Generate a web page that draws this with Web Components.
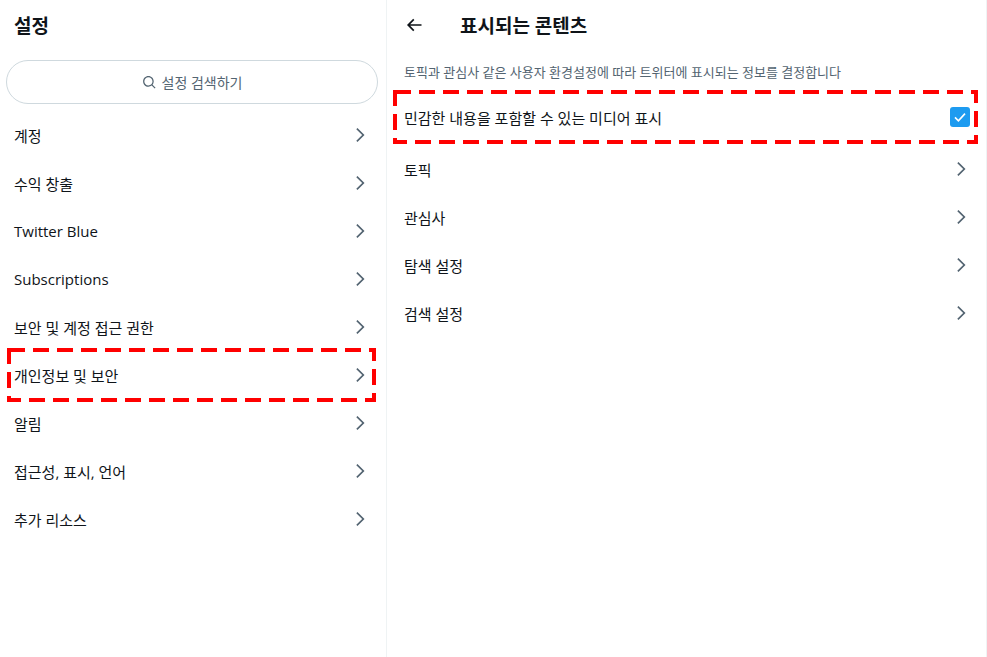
<!DOCTYPE html>
<html lang="ko">
<head>
<meta charset="utf-8">
<style>
  html, body { margin: 0; height: 100%; background: #fff; }
  body { font-family: "Open Sans", "Noto Sans CJK KR", sans-serif; color: #0f1419; overflow: hidden; }
</style>
</head>
<body>
<settings-page>
  <settings-panel slot="left" class="master">
    <settings-title>설정</settings-title>
    <settings-search>설정 검색하기</settings-search>
    <settings-row>계정</settings-row>
    <settings-row>수익 창출</settings-row>
    <settings-row>Twitter Blue</settings-row>
    <settings-row>Subscriptions</settings-row>
    <settings-row>보안 및 계정 접근 권한</settings-row>
    <settings-row marked>개인정보 및 보안</settings-row>
    <settings-row>알림</settings-row>
    <settings-row>접근성, 표시, 언어</settings-row>
    <settings-row>추가 리소스</settings-row>
  </settings-panel>
  <settings-panel slot="right">
    <settings-title back>표시되는 콘텐츠</settings-title>
    <settings-note>토픽과 관심사 같은 사용자 환경설정에 따라 트위터에 표시되는 정보를 결정합니다</settings-note>
    <settings-check>민감한 내용을 포함할 수 있는 미디어 표시</settings-check>
    <settings-row wide>토픽</settings-row>
    <settings-row wide>관심사</settings-row>
    <settings-row wide>탐색 설정</settings-row>
    <settings-row wide>검색 설정</settings-row>
  </settings-panel>
</settings-page>

<script>
const dashBox = (w, h) => `
  <svg class="dash" width="${w}" height="${h}" viewBox="0 0 ${w} ${h}" aria-hidden="true">
    <rect x="2" y="2" width="${w - 4}" height="${h - 4}" fill="none" stroke="#ff0000" stroke-width="4" stroke-dasharray="16 8"/>
  </svg>`

class SettingsPage extends HTMLElement {
  constructor() {
    super();
    this.attachShadow({mode: 'open'}).innerHTML = `
      <style>
        :host { display: grid; grid-template-columns: 387px 600px; height: 657px; }
        ::slotted(settings-panel) { border-right: 1px solid #eff3f4; }
      </style>
      <slot name="left"></slot>
      <slot name="right"></slot>`
  }
}

class SettingsPanel extends HTMLElement {
  constructor() {
    super();
    this.attachShadow({mode: 'open'}).innerHTML = `
      <style>
        :host { display: flex; flex-direction: column; box-sizing: border-box; height: 657px; min-width: 0; }
      </style>
      <slot></slot>`
  }
}

class SettingsTitle extends HTMLElement {
  constructor() {
    super();
    const back = this.hasAttribute('back')
    this.attachShadow({mode: 'open'}).innerHTML = `
      <style>
        :host { display: flex; align-items: center; height: 50px; padding-left: ${back ? 17 : 14}px;
          font-size: 19px; font-weight: 700; color: #0f1419; }
        svg { width: 20px; height: 20px; margin-right: 36px; flex: none; }
      </style>
      ${back ? `<svg viewBox="0 0 24 24" fill="#0f1419"><path d="M7.414 13l5.043 5.04-1.414 1.42L3.586 12l7.457-7.46 1.414 1.42L7.414 11H21v2H7.414z"/></svg>` : ''}
      <slot></slot>`
  }
}

class SettingsSearch extends HTMLElement {
  constructor() {
    super();
    this.attachShadow({mode: 'open'}).innerHTML = `
      <style>
        :host { display: flex; align-items: center; justify-content: center; gap: 5px; box-sizing: border-box;
          height: 44px; margin: 10px 8px 7px 6px; border: 1px solid #cfd9de; border-radius: 22px;
          font-size: 14px; color: #536471; }
        svg { width: 15px; height: 15px; flex: none; }
      </style>
      <svg viewBox="0 0 24 24" fill="#536471"><path d="M10.25 3.75c-3.59 0-6.5 2.91-6.5 6.5s2.91 6.5 6.5 6.5c1.795 0 3.419-.726 4.596-1.904 1.178-1.177 1.904-2.801 1.904-4.596 0-3.59-2.91-6.5-6.5-6.5zm-8.5 6.5c0-4.694 3.806-8.5 8.5-8.5s8.5 3.806 8.5 8.5c0 1.986-.682 3.815-1.824 5.262l4.781 4.781-1.414 1.414-4.781-4.781c-1.447 1.142-3.276 1.824-5.262 1.824-4.694 0-8.5-3.806-8.5-8.5z"/></svg>
      <slot></slot>`
  }
}

class SettingsRow extends HTMLElement {
  constructor() {
    super();
    const marked = this.hasAttribute('marked')
    this.attachShadow({mode: 'open'}).innerHTML = `
      <style>
        :host { display: flex; align-items: center; justify-content: space-between; position: relative;
          height: 48px; flex: none; padding: 0 ${this.hasAttribute('wide') ? 15 : 16}px 0 ${this.hasAttribute('wide') ? 17 : 14}px;
          font-size: 15px; color: #0f1419; }
        svg.chev { width: 20px; height: 20px; flex: none; }
        .dash { position: absolute; left: 7px; top: -3px; }
      </style>
      <slot></slot>
      <svg class="chev" viewBox="0 0 24 24" fill="#536471"><path d="M14.586 12L7.543 4.96l1.414-1.42L17.414 12l-8.457 8.46-1.414-1.42L14.586 12z"/></svg>
      ${marked ? dashBox(369, 54) : ''}`
  }
}

class SettingsNote extends HTMLElement {
  constructor() {
    super();
    this.attachShadow({mode: 'open'}).innerHTML = `
      <style>
        :host { display: flex; align-items: center; height: 42px; padding-left: 17px; font-size: 13px; color: #536471; }
      </style>
      <slot></slot>`
  }
}

class SettingsCheck extends HTMLElement {
  constructor() {
    super();
    this.attachShadow({mode: 'open'}).innerHTML = `
      <style>
        :host { display: flex; align-items: center; justify-content: space-between; position: relative;
          height: 50px; margin-bottom: 3px; padding: 0 16px 0 17px; font-size: 15px; color: #0f1419; }
        .box { width: 20px; height: 20px; border-radius: 3px; background: #1d9bf0; flex: none; }
        .box svg { display: block; width: 20px; height: 20px; }
        .dash { position: absolute; left: 6px; top: -2px; }
      </style>
      <slot></slot>
      <span class="box"><svg viewBox="0 0 20 20" fill="none" stroke="#fff" stroke-width="1.6"><path d="M5 10.4l3.4 3.4L15 6.6"/></svg></span>
      ${dashBox(585, 54)}`
  }
}

window.customElements.define('settings-page', SettingsPage)
window.customElements.define('settings-panel', SettingsPanel)
window.customElements.define('settings-title', SettingsTitle)
window.customElements.define('settings-search', SettingsSearch)
window.customElements.define('settings-row', SettingsRow)
window.customElements.define('settings-note', SettingsNote)
window.customElements.define('settings-check', SettingsCheck)
</script>
</body>
</html>
